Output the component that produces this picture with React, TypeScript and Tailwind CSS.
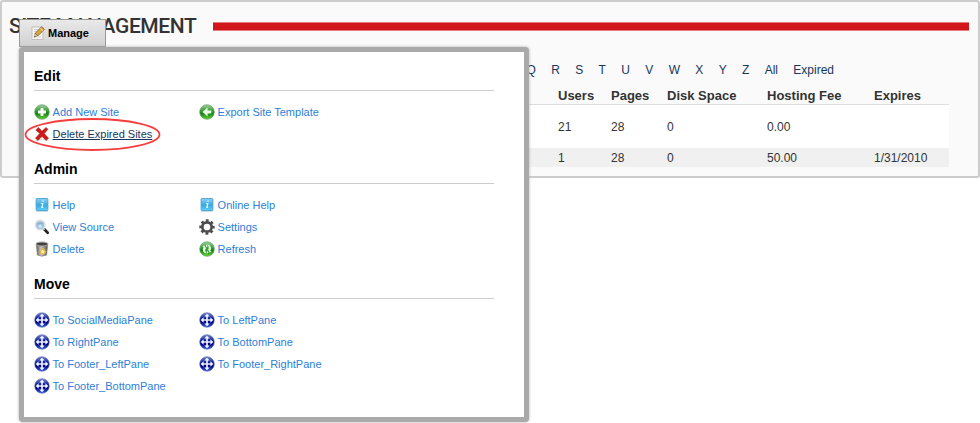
import React from "react";

type IconName = "add" | "delete" | "export" | "info" | "search" | "trash" | "gear" | "refresh" | "move";
type Item = { label: string; icon: IconName; active?: boolean };

const letters = [..."ABCDEFGHIJKLMNOPQRSTUVWXYZ", "All", "Expired"];

const sections: { title: string; items: Item[] }[] = [
  {
    title: "Edit",
    items: [
      { label: "Add New Site", icon: "add" },
      { label: "Export Site Template", icon: "export" },
      { label: "Delete Expired Sites", icon: "delete", active: true },
    ],
  },
  {
    title: "Admin",
    items: [
      { label: "Help", icon: "info" },
      { label: "Online Help", icon: "info" },
      { label: "View Source", icon: "search" },
      { label: "Settings", icon: "gear" },
      { label: "Delete", icon: "trash" },
      { label: "Refresh", icon: "refresh" },
    ],
  },
  {
    title: "Move",
    items: [
      { label: "To SocialMediaPane", icon: "move" },
      { label: "To LeftPane", icon: "move" },
      { label: "To RightPane", icon: "move" },
      { label: "To BottomPane", icon: "move" },
      { label: "To Footer_LeftPane", icon: "move" },
      { label: "To Footer_RightPane", icon: "move" },
      { label: "To Footer_BottomPane", icon: "move" },
    ],
  },
];

function Gradients() {
  return (
    <svg className="absolute h-0 w-0">
      <defs>
        <linearGradient id="green" x2="0" y2="1">
          <stop offset="0" stopColor="#a5cfa2" />
          <stop offset=".45" stopColor="#2c9a2c" />
          <stop offset=".6" stopColor="#138414" />
          <stop offset="1" stopColor="#63d435" />
        </linearGradient>
        <linearGradient id="blue" x2="0" y2="1">
          <stop offset="0" stopColor="#7d8ed0" />
          <stop offset=".4" stopColor="#0c1c98" />
          <stop offset=".65" stopColor="#00007c" />
          <stop offset="1" stopColor="#3b6ce8" />
        </linearGradient>
        <linearGradient id="sky" x2="0" y2="1">
          <stop offset="0" stopColor="#8ed2f5" />
          <stop offset=".55" stopColor="#38a9e2" />
          <stop offset="1" stopColor="#5fd0f8" />
        </linearGradient>
        <linearGradient id="bin" x2="1" y2="0">
          <stop offset="0" stopColor="#5f5d5a" />
          <stop offset=".4" stopColor="#c4c2be" />
          <stop offset="1" stopColor="#5c5957" />
        </linearGradient>
        <radialGradient id="lens" cx=".5" cy=".65">
          <stop offset="0" stopColor="#eaf7ff" />
          <stop offset=".5" stopColor="#9cc3e2" />
          <stop offset="1" stopColor="#c3d2e0" />
        </radialGradient>
      </defs>
    </svg>
  );
}

function Icon({ name }: { name: IconName }) {
  return (
    <svg viewBox="0 0 16 16" className="h-4 w-4 shrink-0">
      {name === "add" && (
        <>
          <circle cx="8" cy="8" r="7.3" fill="url(#green)" stroke="#6b9b69" strokeWidth=".7" />
          <path d="M8 4v8M4 8h8" stroke="#fff" strokeWidth="2.8" />
        </>
      )}
      {name === "export" && (
        <>
          <circle cx="8" cy="8" r="7.3" fill="url(#green)" stroke="#6b9b69" strokeWidth=".7" />
          <path d="M12.3 6.6H8.6V3.6L3.5 8l5.100 4.400V9.600h3.700z" fill="#eafbe6" />
        </>
      )}
      {name === "refresh" && (
        <>
          <circle cx="8" cy="8" r="7.300" fill="url(#green)" stroke="#5fa75c" strokeWidth=".7" />
          <path d="M7.600 12.400C4.200 12 3 8.800 4.600 6.200L3.600 5 8.300 3.600 8 8.300 6.700 7.400C6 9 6.300 10.800 7.600 12.400z" fill="#f4fff0" />
          <path d="M8.400 3.600c3.400.4 4.600 3.600 3 6.200l1 1.200-4.700 1.400.3-4.700 1.300.9c.7-1.600.4-3.400-.9-5z" fill="#d9f8cf" />
          <path d="M5.800 3.900 10.400 12.300" stroke="#2f9a2c" strokeWidth="1.100" />
        </>
      )}
      {name === "move" && (
        <>
          <circle cx="8" cy="8" r="7.300" fill="url(#blue)" stroke="#5b68ad" strokeWidth=".6" />
          <path d="M8 3.500v9M3.500 8h9" stroke="#e8edff" strokeWidth="1.700" />
          <path d="M8 1.700 10.700 4.600H5.300zM8 14.300l2.700-2.900H5.300zM1.700 8l2.900-2.700v5.400zM14.300 8l-2.900-2.700v5.400z" fill="#f4f7ff" />
        </>
      )}
      {name === "delete" && (
        <>
          <path d="M2 14.500q6-2 12.500 0" stroke="#ddd" fill="none" />
          <path d="M1.800 3.900 4.400 1.500 8 5.100 12 1.500 14 3.200 10.300 7.600l4.300 4.700-2.600 2.100L8 10.400 4 14.500 1.400 12.200l4.300-4.600z" fill="#cc1b1b" stroke="#99261f" strokeWidth=".5" />
        </>
      )}
      {name === "info" && (
        <>
          <rect x="2.100" y="1.500" width="11.800" height="12" rx=".8" fill="url(#sky)" stroke="#4c9fc9" strokeWidth=".9" />
          <path d="M2 14.500h12" stroke="#b8d6e2" strokeWidth=".8" />
          <path d="M8.400 4.200h1.300M7.200 6.600h1.600L7.900 10.500h1.300" stroke="#e9faff" strokeWidth="1.200" fill="none" />
        </>
      )}
      {name === "search" && (
        <>
          <path d="m10.300 10.300 3.400 3.400" stroke="#222" strokeWidth="2.700" strokeLinecap="round" />
          <path d="m9 9 1.700 1.700" stroke="#bbb" strokeWidth="1.500" />
          <circle cx="6.200" cy="6" r="4.900" fill="url(#lens)" stroke="#dce0e5" strokeWidth="1.200" />
          <path d="M3 5.300q3.200-3.500 6.400 0" stroke="#86a9c5" strokeWidth="1.200" fill="none" />
        </>
      )}
      {name === "trash" && (
        <>
          <path d="M2.200 3 3.300 14q4.700 2.500 9.400 0L13.800 3z" fill="url(#bin)" stroke="#777" strokeWidth=".5" />
          <ellipse cx="8" cy="3" rx="6" ry="2" fill="#44403d" stroke="#aaa" strokeWidth="1" />
          <path d="m8.500 7.300-2.400 3L7.300 13h2.900l1.200-2.700z" stroke="#efb62d" strokeWidth="1.600" fill="#fbf0ca" strokeDasharray="2.700 .7" />
        </>
      )}
      {name === "gear" && (
        <g stroke="#4b4b4b" fill="none">
          <circle cx="8" cy="8" r="4.700" strokeWidth="2.700" />
          <circle cx="8" cy="8" r="6.600" strokeWidth="2.200" strokeDasharray="2.900 2.284" strokeDashoffset="1.450" />
        </g>
      )}
    </svg>
  );
}

function NoteIcon() {
  return (
    <svg viewBox="0 0 16 16" className="h-4 w-4">
      <path d="M2 2h11v12.500H2z" fill="#f8f8f8" stroke="#bdbdbd" />
      <path d="M4 4.500h5M4 6.500h4M4 8.500h2M4 12h7" stroke="#d2d2d2" />
      <path d="m4.300 12.200 1-3.800 2.600 2.200z" fill="#eed9a6" stroke="#72552e" strokeWidth=".5" />
      <path d="m5.100 8.400 6.400-6.600 2.900 2.500-6.400 6.500z" fill="#daa63c" stroke="#80602c" strokeWidth=".8" />
      <path d="m10.300 3.300 2.600 2.300" stroke="#eee2c3" />
      <path d="m4.300 12.200.4-1.500 1 .9z" fill="#333" />
    </svg>
  );
}

const columns = "grid grid-cols-[53px_56px_100px_107px_75px] pl-[539px]";

export default function App() {
  return (
    <div className="relative h-[423px] w-[980px] overflow-hidden bg-white font-['Liberation_Sans',Arial,sans-serif]">
      <Gradients />
      <main className="h-[178px] w-[980px] rounded-[3px] border-2 border-[#ccc] bg-[#fafafa] pl-[7px]">
        <header className="flex h-12 items-center gap-4 pr-[9px]">
          <h1 className="w-[188px] whitespace-nowrap font-[Roboto,sans-serif] text-[21px] font-medium leading-6 tracking-[-0.4px] text-[#333]">SITE MANAGEMENT</h1>
          <div className="h-[9px] flex-1 border-y border-[#e67b7e] bg-[#d0161b]" />
        </header>
        <nav className="mt-[12px] flex h-4 w-[825px] justify-end gap-[15.330px] text-xs leading-4 text-[#17365d]">
          {letters.map((letter) => <a key={letter}>{letter}</a>)}
        </nav>
        <div className="ml-[10px] w-[930px] text-xs text-[#333]">
          <div className={`${columns} h-[27px] border-b border-[#ddd] pt-[10px] text-[13px] font-bold leading-4`}>
            <span>Users</span><span>Pages</span><span>Disk Space</span><span>Hosting Fee</span><span>Expires</span>
          </div>
          <div className={`${columns} h-[43px] items-center bg-white`}>
            <span>21</span><span>28</span><span>0</span><span>0.00</span><span />
          </div>
          <div className={`${columns} h-[19px] items-center bg-[#f0f0f0]`}>
            <span>1</span><span>28</span><span>0</span><span>50.00</span><span>1/31/2010</span>
          </div>
        </div>
      </main>

      <button className="absolute left-[19px] top-[19px] flex h-7 w-[87px] items-center gap-[2.500px] border border-[#999] bg-linear-to-b from-[#e9e9e9] to-[#d1d1d1] pl-[9.500px] text-[11px] font-bold text-black">
        <NoteIcon />
        Manage
      </button>

      <section className="absolute left-[19px] top-[47px] h-[375px] w-[510px] rounded-[4px] border-[5px] border-[#aaa] bg-white pl-[10px] pt-[14px] shadow-[0_0_3px_#aaa]">
        <div className="flex w-[460px] flex-col gap-[14px]">
          {sections.map((section) => (
            <div key={section.title}>
              <h2 className="h-[25px] border-b border-[#ccc] text-sm font-bold leading-5 text-black">{section.title}</h2>
              <div className="grid grid-cols-[165px_165px] pt-[10px]">
                {section.items.map((item) => (
                  <a key={item.label} className={`flex h-[22px] items-center gap-[2.600px] whitespace-nowrap text-[11px] ${item.active ? "text-[#17365d] underline" : "text-[#2d80d8]"}`}>
                    <Icon name={item.icon} />
                    {item.label}
                  </a>
                ))}
              </div>
            </div>
          ))}
        </div>
      </section>
      <svg viewBox="0 0 138 36" className="absolute left-[24px] top-[116px] h-9 w-[138px]">
        <ellipse cx="68.500" cy="18.500" rx="67" ry="15.500" fill="none" stroke="#f63d3d" strokeWidth="1.800" />
      </svg>
    </div>
  );
}
